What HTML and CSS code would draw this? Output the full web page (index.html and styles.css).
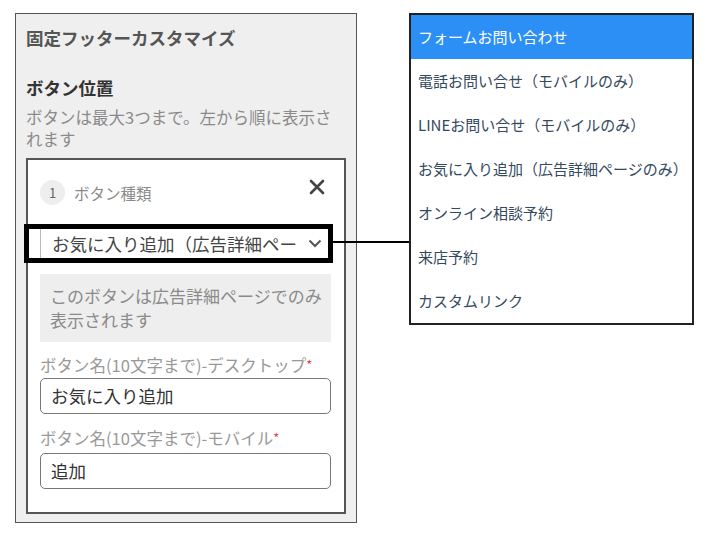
FILE: index.html
```html
<!DOCTYPE html>
<html lang="ja">
<head>
    <meta charset="UTF-8">
    <meta name="viewport" content="width=device-width, initial-scale=1.0">
    <title>固定フッターカスタマイズ</title>
    <link rel="stylesheet" href="styles.css">
</head>
<body>

    <div class="screen">
        <!-- Settings panel -->
        <div class="panel">
            <h1>固定フッターカスタマイズ</h1>
            <h2>ボタン位置</h2>
            <p class="desc">ボタンは最大3つまで。左から順に表示さ<br>れます</p>

            <div class="card">
                <div class="card-head">
                    <span class="badge">1</span>
                    <span class="card-title">ボタン種類</span>
                    <svg class="close" width="16" height="16" viewBox="0 0 16 16">
                        <path d="M2 2 L14 14 M14 2 L2 14" stroke="#444" stroke-width="2.6" stroke-linecap="round"/>
                    </svg>
                </div>

                <div class="select">
                    <span class="select-text">お気に入り追加（広告詳細ペー</span>
                    <svg class="chevron" width="14" height="9" viewBox="0 0 14 9">
                        <path d="M1.5 1.5 L7 7 L12.5 1.5" fill="none" stroke="#555" stroke-width="2"/>
                    </svg>
                </div>

                <div class="notice">このボタンは広告詳細ページでのみ表示されます</div>

                <label class="field-label">ボタン名(10文字まで)-デスクトップ<span class="req">*</span></label>
                <div class="input">お気に入り追加</div>

                <label class="field-label">ボタン名(10文字まで)-モバイル<span class="req">*</span></label>
                <div class="input">追加</div>
            </div>
        </div>

        <!-- Opened option list -->
        <ul class="options">
            <li class="active">フォームお問い合わせ</li>
            <li>電話お問い合せ（モバイルのみ）</li>
            <li>LINEお問い合せ（モバイルのみ）</li>
            <li>お気に入り追加（広告詳細ページのみ）</li>
            <li>オンライン相談予約</li>
            <li>来店予約</li>
            <li>カスタムリンク</li>
        </ul>

        <!-- Annotation: highlight + connector -->
        <div class="callout"></div>
        <div class="connector"></div>
    </div>

</body>
</html>
```

FILE: styles.css
```css
body {
    margin: 0;
    background-color: #ffffff;
    font-family: "Noto Sans CJK JP", "Noto Sans", sans-serif;
}

.screen {
    position: relative;
    width: 705px;
    height: 536px;
    display: flex;
    align-items: flex-start;
}

/* Left settings panel */
.panel {
    box-sizing: border-box;
    width: 342px;
    margin: 13px 0 0 15px;
    padding: 12px 10px 8px 10px;
    background-color: #efefef;
    border: 1px solid #555;
}

h1 {
    margin: 0;
    font-size: 17.5px;
    line-height: 24px;
    font-weight: bold;
    color: #555;
}

h2 {
    margin: 26px 0 0 0;
    font-size: 17.5px;
    line-height: 24px;
    font-weight: bold;
    color: #333;
}

.desc {
    margin: 6px 0 0 0;
    font-size: 16.5px;
    line-height: 22px;
    color: #8a8a8a;
}

/* Button card */
.card {
    margin-top: 8px;
    padding: 20px 13px 23px 12px;
    background-color: #ffffff;
    border: 2px solid #555;
}

.card-head {
    display: flex;
    align-items: center;
    height: 25px;
}

.badge {
    width: 25px;
    height: 25px;
    border-radius: 50%;
    background-color: #eeeeee;
    color: #666;
    font-size: 13px;
    line-height: 25px;
    text-align: center;
}

.card-title {
    margin-left: 9px;
    font-size: 15.5px;
    color: #8a8a8a;
}

.close {
    margin-left: auto;
    margin-right: 6px;
    margin-top: -12px;
}

.select {
    display: flex;
    align-items: center;
    height: 34px;
    margin-top: 20px;
    padding: 0 8px 0 11px;
    border: 1px solid #bbb;
}

.select-text {
    flex: 1;
    white-space: nowrap;
    font-size: 17.5px;
    color: #444;
}

.chevron {
    flex: none;
    margin-left: 4px;
}

.notice {
    margin-top: 13px;
    padding: 10px 0 10px 10px;
    background-color: #eeeeee;
    font-size: 17px;
    line-height: 24px;
    color: #8a8a8a;
}

.field-label {
    display: block;
    margin-top: 11px;
    font-size: 16.5px;
    line-height: 24px;
    color: #999;
}

.field-label + .input {
    margin-top: 1px;
}

.input + .field-label {
    margin-top: 12px;
}

.req {
    color: #e84545;
    font-size: 13px;
    vertical-align: top;
}

.input {
    box-sizing: border-box;
    height: 36px;
    padding: 0 10px;
    border: 1.5px solid #777;
    border-radius: 5px;
    font-size: 17.5px;
    line-height: 33px;
    color: #333;
}

.input:last-child {
    margin-top: 3px;
}

/* Option list */
.options {
    box-sizing: border-box;
    width: 285px;
    margin: 13px 0 0 52px;
    padding: 0;
    list-style: none;
    border: 2px solid #222;
}

.options li {
    height: 44px;
    padding-left: 7px;
    font-size: 15px;
    line-height: 44px;
    color: #34495e;
    white-space: nowrap;
}

.options li.active {
    background-color: #2b8ff5;
    color: #ffffff;
}

/* Annotation overlay */
.callout {
    position: absolute;
    left: 24px;
    top: 224px;
    width: 299px;
    height: 29px;
    border: 5px solid #000;
}

.connector {
    position: absolute;
    left: 333px;
    top: 241px;
    width: 76px;
    height: 2px;
    background-color: #000;
}
```
